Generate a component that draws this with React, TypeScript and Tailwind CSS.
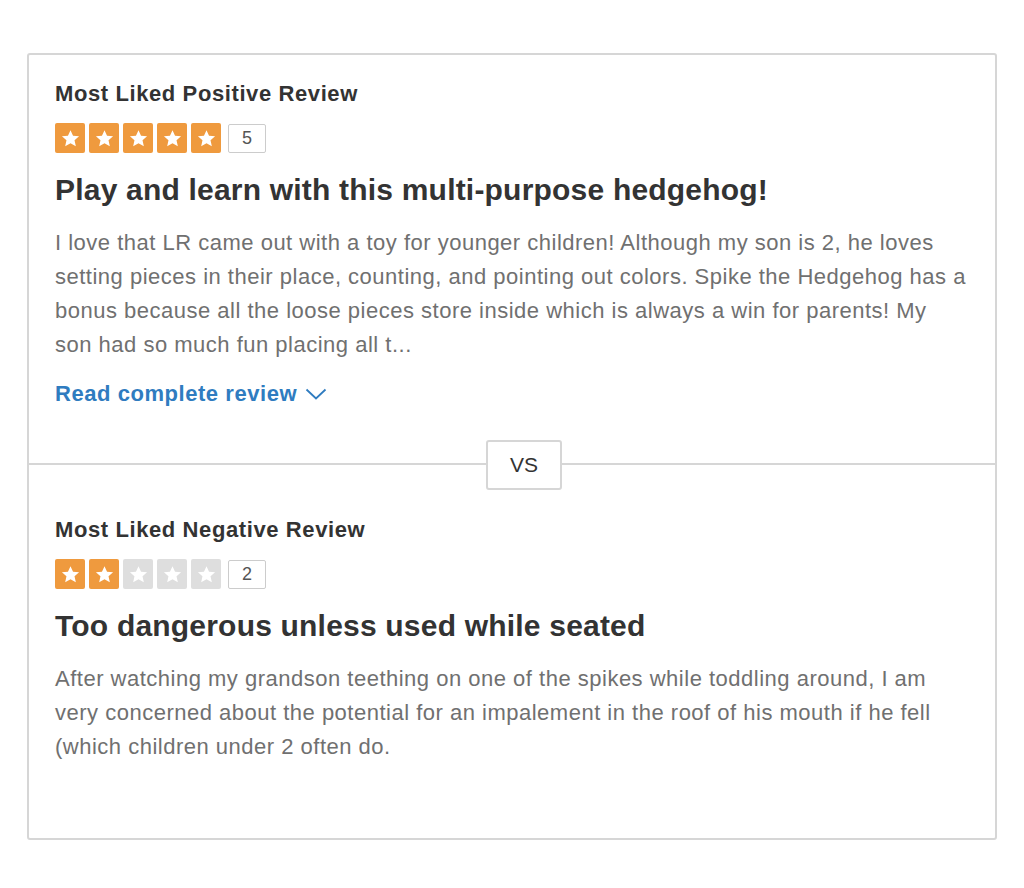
import React from 'react';

interface ReviewProps {
  label: string;
  rating: number;
  title: string;
  body: string;
  showLink?: boolean;
}

const Star: React.FC<{ filled: boolean }> = ({ filled }) => (
  <div
    className={`flex h-[30px] w-[30px] items-center justify-center rounded-[2px] ${
      filled ? 'bg-[#ef9a3e]' : 'bg-[#dedede]'
    }`}
  >
    <svg width="21" height="21" viewBox="0 0 24 24" fill="#ffffff">
      <path d="M12 2.5l2.9 6.3 6.9.7-5.2 4.6 1.5 6.8L12 17.4l-6.1 3.5 1.5-6.8-5.2-4.6 6.9-.7z" />
    </svg>
  </div>
);

const Review: React.FC<ReviewProps> = ({ label, rating, title, body, showLink }) => {
  return (
    <div>
      <h4 className="text-[22px] font-bold leading-[24px] tracking-[0.6px] text-[#333333]">{label}</h4>
      <div className="mt-[17px] flex items-center gap-[4px]">
        {[1, 2, 3, 4, 5].map((i) => (
          <Star key={i} filled={i <= rating} />
        ))}
        <div className="ml-[3px] flex h-[29px] w-[38px] items-center justify-center rounded-[2px] border border-[#cccccc] text-[18px] text-[#555555]">
          {rating}
        </div>
      </div>
      <h3 className="mt-[19px] text-[30px] font-bold leading-[36px] tracking-[0.2px] text-[#333333]">{title}</h3>
      <p className="mt-[18px] text-[22px] leading-[34px] tracking-[0.5px] text-[#707070]">{body}</p>
      {showLink && (
        <a className="mt-[20px] flex items-center gap-[7px] text-[22px] font-bold leading-[24px] tracking-[0.55px] text-[#2f7cc0]">
          Read complete review
          <svg width="24" height="14" viewBox="0 0 22 14" fill="none" stroke="#2f7cc0" strokeWidth="1.8">
            <path d="M1.5 2.5l9.5 9 9.5-9" />
          </svg>
        </a>
      )}
    </div>
  );
};

export default function App() {
  return (
    <div
      className="min-h-[888px] bg-white px-[27px] pt-[53px]"
      style={{ fontFamily: '"Liberation Sans", Arial, sans-serif' }}
    >
      <div className="relative w-[970px] rounded-[3px] border-2 border-[#d6d6d6]">
        <div className="border-b-2 border-[#d6d6d6] px-[26px] pt-[27px] pb-[57px]">
          <Review
            label="Most Liked Positive Review"
            rating={5}
            title="Play and learn with this multi-purpose hedgehog!"
            body="I love that LR came out with a toy for younger children! Although my son is 2, he loves setting pieces in their place, counting, and pointing out colors. Spike the Hedgehog has a bonus because all the loose pieces store inside which is always a win for parents! My son had so much fun placing all t..."
            showLink
          />
        </div>
        <div className="absolute left-[457px] top-[385px] flex h-[50px] w-[76px] items-center justify-center rounded-[3px] border-2 border-[#d6d6d6] bg-white text-[21px] text-[#333333]">
          VS
        </div>
        <div className="px-[26px] pt-[53px] pb-[74px]">
          <Review
            label="Most Liked Negative Review"
            rating={2}
            title="Too dangerous unless used while seated"
            body="After watching my grandson teething on one of the spikes while toddling around, I am very concerned about the potential for an impalement in the roof of his mouth if he fell (which children under 2 often do."
          />
        </div>
      </div>
    </div>
  );
}
